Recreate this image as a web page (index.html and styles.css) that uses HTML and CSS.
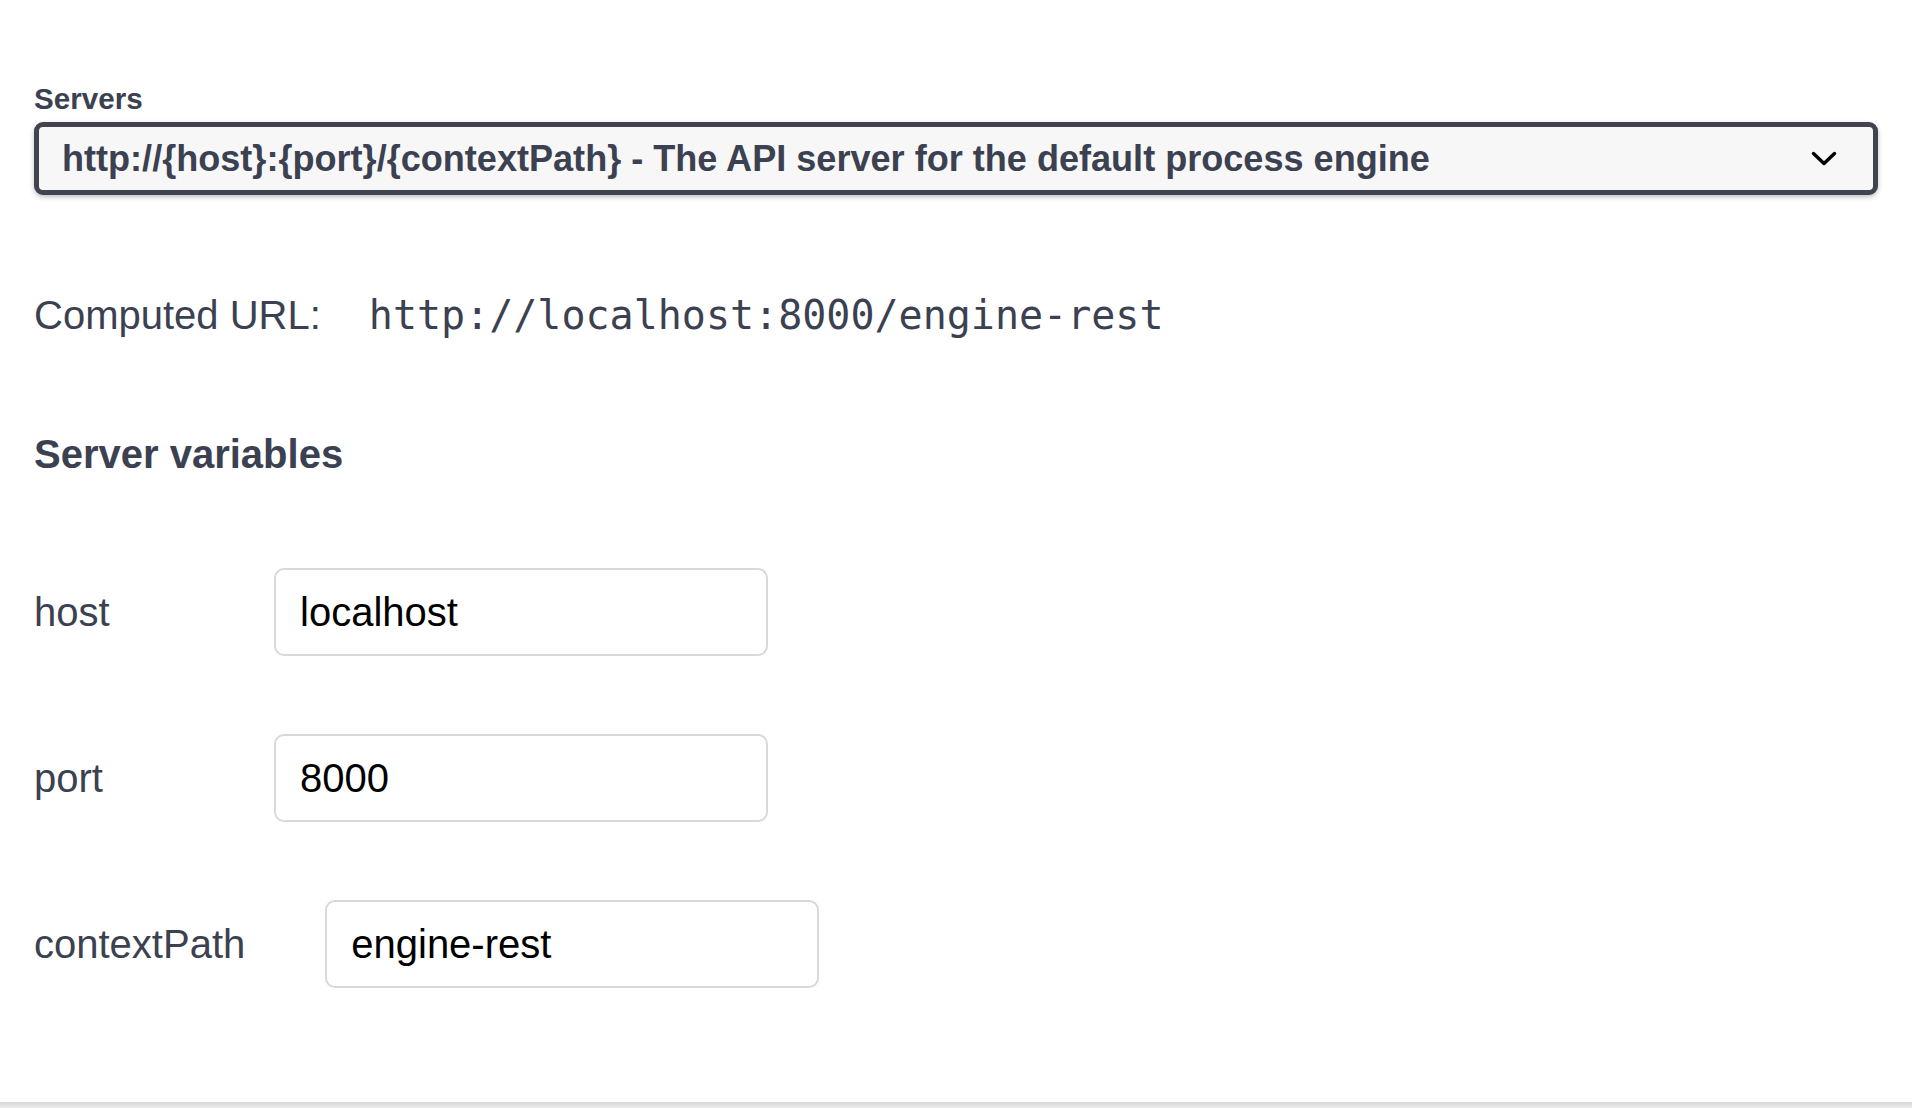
FILE: index.html
```
<!DOCTYPE html>
<html lang="en">
<head>
<meta charset="utf-8">
<title>Servers</title>
<link rel="stylesheet" href="styles.css">
</head>
<body>
<section class="scheme-container">
  <div class="servers">
    <label class="servers-title" for="servers-select">Servers</label>
    <div class="select-wrap">
      <select id="servers-select" class="server-select">
        <option>http://{host}:{port}/{contextPath} - The API server for the default process engine</option>
      </select>
      <svg class="chevron" width="26" height="16" viewBox="0 0 26 16" aria-hidden="true"><polyline points="2.5,2.5 13,12.5 23.5,2.5" fill="none" stroke="#000" stroke-width="3.4" stroke-linecap="round" stroke-linejoin="round"/></svg>
    </div>
    <div class="computed-url"><span>Computed URL:</span><code>http://localhost:8000/engine-rest</code></div>
    <h4 class="vars-title">Server variables</h4>
    <div class="vars">
      <div class="var-row">
        <span class="var-name">host</span>
        <input class="var-input" type="text" value="localhost">
      </div>
      <div class="var-row">
        <span class="var-name">port</span>
        <input class="var-input" type="text" value="8000">
      </div>
      <div class="var-row">
        <span class="var-name">contextPath</span>
        <input class="var-input" type="text" value="engine-rest">
      </div>
    </div>
  </div>
</section>
<div class="container-edge"></div>
</body>
</html>
```
FILE: styles.css
```
html, body {
  margin: 0;
  padding: 0;
  background: #fff;
}

body {
  font-family: "Liberation Sans", Arial, Helvetica, sans-serif;
  color: #3b4151;
}

.scheme-container {
  background: #fff;
  padding: 82px 34px 114px 34px;
}

.container-edge {
  height: 8px;
  background: linear-gradient(#d6d6d6, #e6e6e6 50%, #f4f4f4);
}

.servers {
  display: flex;
  flex-direction: column;
}

.servers-title {
  display: block;
  font-size: 29.6px;
  font-weight: 700;
  line-height: 34px;
  margin-bottom: 6px;
  color: #3b4151;
}

.select-wrap {
  position: relative;
}

.server-select {
  display: block;
  width: 100%;
  height: 73px;
  box-sizing: border-box;
  -webkit-appearance: none;
  appearance: none;
  background: #f7f7f7;
  border: 5px solid #41444e;
  border-radius: 9px;
  box-shadow: 0 2px 5px 0 rgba(0, 0, 0, 0.25);
  font-family: "Liberation Sans", Arial, Helvetica, sans-serif;
  font-size: 36.1px;
  font-weight: 700;
  color: #3b4151;
  padding: 0 98px 0 23px;
  outline: none;
}

.chevron {
  position: absolute;
  right: 41px;
  top: 29px;
  pointer-events: none;
}

.computed-url {
  margin-top: 96px;
  font-size: 40px;
  line-height: 48px;
  height: 48px;
  white-space: nowrap;
}

.computed-url code {
  font-family: "DejaVu Sans Mono", "Liberation Mono", monospace;
  font-size: 40px;
  padding: 0 10px;
  margin-left: 38px;
  color: #3b4151;
}

.vars-title {
  margin: 91px 0 0 0;
  font-size: 40px;
  font-weight: 700;
  line-height: 48px;
  color: #3b4151;
}

.vars {
  display: flex;
  flex-direction: column;
  gap: 78px;
  margin-top: 90px;
}

.var-row {
  display: flex;
  align-items: center;
}

.var-name {
  min-width: 160px;
  padding-right: 80px;
  font-size: 40px;
  line-height: 48px;
  color: #3b4151;
}

.var-input {
  width: 494px;
  height: 88px;
  box-sizing: border-box;
  border: 2px solid #d9d9d9;
  border-radius: 10px;
  background: #fff;
  padding: 0 24px;
  font-family: "Liberation Sans", Arial, Helvetica, sans-serif;
  font-size: 40px;
  color: #000;
  outline: none;
  margin: 0;
}
```
